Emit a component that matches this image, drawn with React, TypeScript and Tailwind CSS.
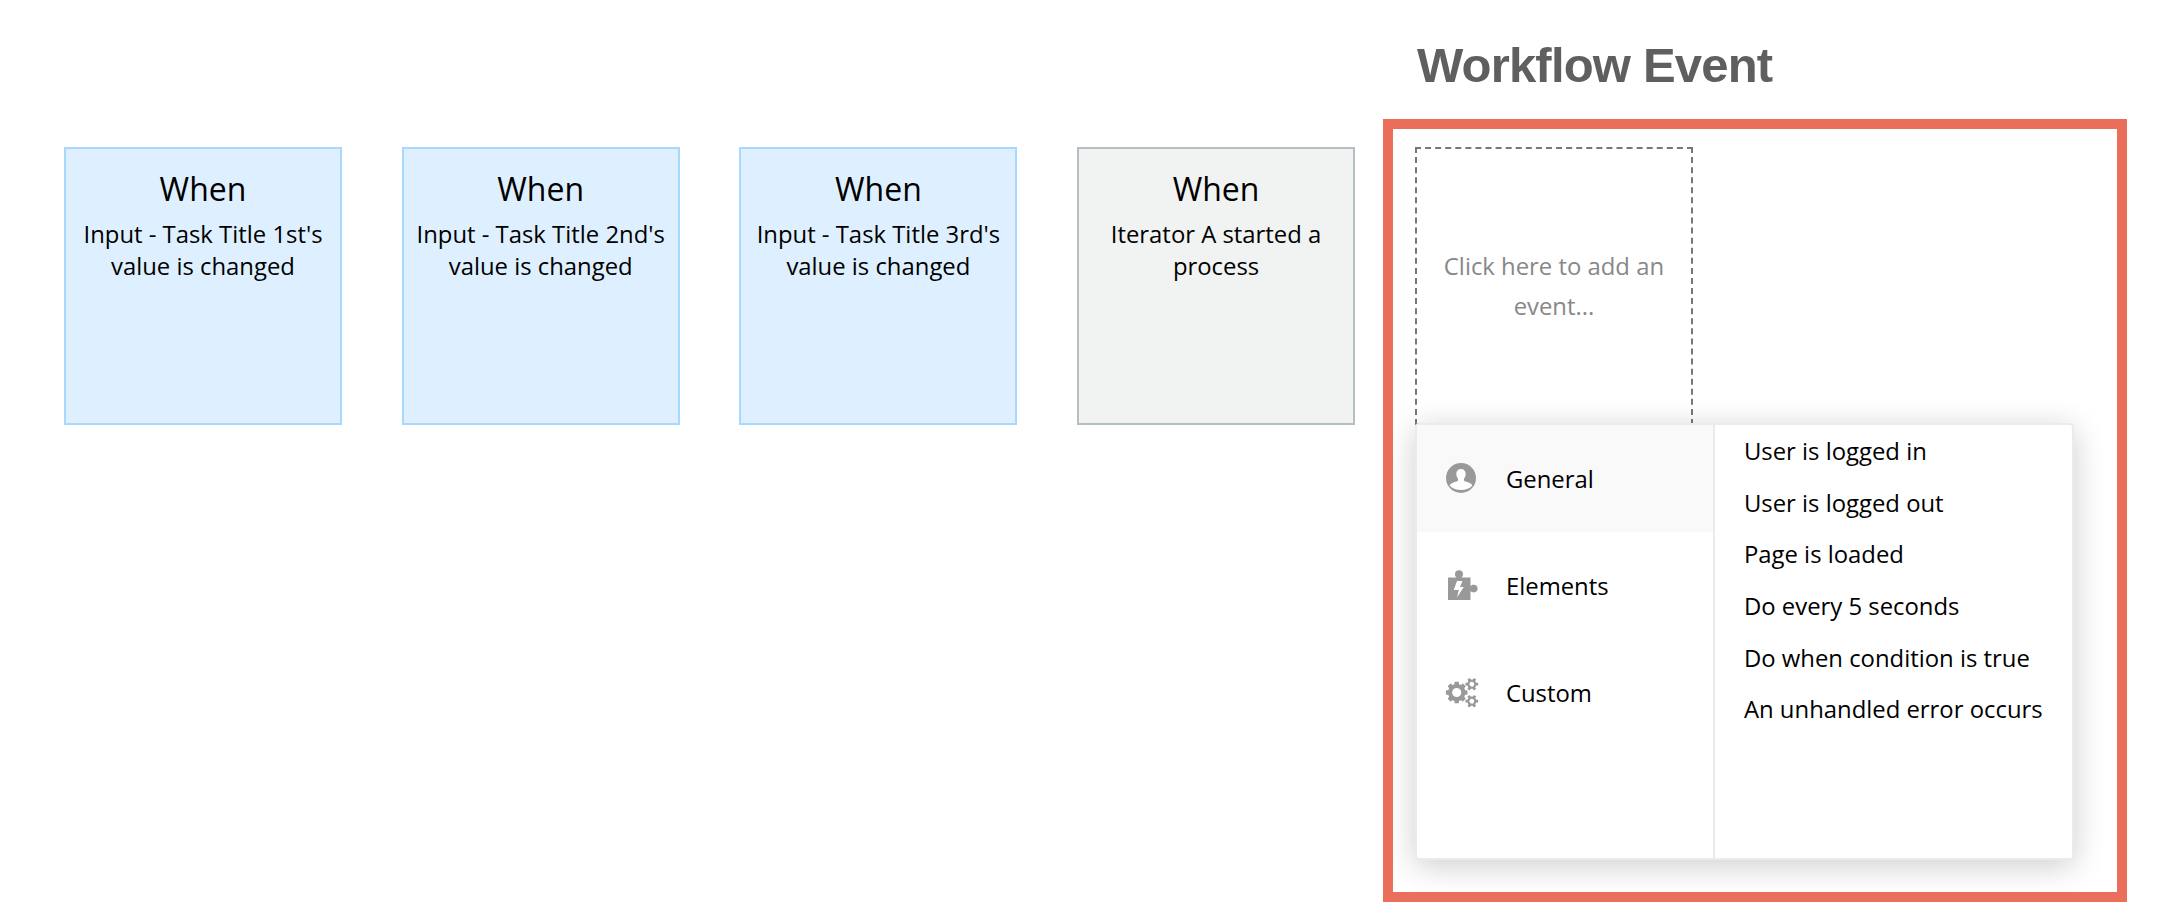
import React, { useState } from "react";

const events = [
  { id: 1, text: "Input - Task Title 1st's value is changed", tone: "blue" },
  { id: 2, text: "Input - Task Title 2nd's value is changed", tone: "blue" },
  { id: 3, text: "Input - Task Title 3rd's value is changed", tone: "blue" },
  { id: 4, text: "Iterator A started a process", tone: "gray" },
];

const UserIcon = () => (
  <svg className="w-8 h-8" viewBox="0 0 32 32" aria-hidden="true">
    <circle cx="15" cy="15" r="15" fill="#999" />
    <path
      d="M15 6c3 0 4.8 2 4.7 5-.1 2.3-.9 3.600-1.700 4.700v1.800c0 1.300 8.200 1.800 8.200 5.300C23.500 25.800 19 27 15 27s-8.500-1.200-11.200-4.200c0-3.500 8.200-4 8.200-5.300v-1.800c-.8-1.100-1.600-2.400-1.700-4.700C10.200 8 12 6 15 6z"
      fill="#fff"
    />
  </svg>
);

const PuzzleIcon = () => (
  <svg className="w-8 h-8" viewBox="0 0 32 32" aria-hidden="true">
    <path
      d="M2 7.500h8.500C9.300 6.500 9 5.300 9 4.200a4 4 0 0 1 8 0c0 1.100-.3 2.300-1.500 3.300h9v8.700c1-1 2-1.400 3.300-1.400a3.800 3.800 0 0 1 0 7.600c-1.300 0-2.300-.4-3.300-1.400v9H2z"
      fill="#999"
    />
    <path d="M11 11h5.500l-2.500 6h3.800L11 27.500l1.800-7.500H7.700z" fill="#fff" />
  </svg>
);

const Gear = ({ cx, cy, r, teeth, hole, toothWidth, toothHeight, turn = 0 }) => (
  <g transform={`translate(${cx} ${cy}) rotate(${turn})`}>
    <circle r={(r + hole) / 2} fill="none" stroke="#999" strokeWidth={r - hole} />
    {Array.from({ length: teeth }).map((_, i) => (
      <rect
        key={i}
        x={-toothWidth / 2}
        y={-r - toothHeight}
        width={toothWidth}
        height={toothHeight + 1}
        rx="0.6"
        fill="#999"
        transform={`rotate(${(360 / teeth) * i})`}
      />
    ))}
  </g>
);

const GearsIcon = () => (
  <svg className="w-8 h-8 overflow-visible" viewBox="0 0 32 32" aria-hidden="true">
    <Gear cx={10.7} cy={15.5} r={8.7} teeth={8} hole={4.6} toothWidth={4.4} toothHeight={2.1} />
    <Gear cx={25.8} cy={7.2} r={4.6} teeth={6} hole={2.4} toothWidth={2.8} toothHeight={1.8} turn={30} />
    <Gear cx={25.8} cy={24.2} r={4.6} teeth={6} hole={2.4} toothWidth={2.8} toothHeight={1.8} turn={30} />
  </svg>
);

const categories = [
  { id: "general", name: "General", icon: <UserIcon /> },
  { id: "elements", name: "Elements", icon: <PuzzleIcon /> },
  { id: "custom", name: "Custom", icon: <GearsIcon /> },
];

const options = [
  "User is logged in",
  "User is logged out",
  "Page is loaded",
  "Do every 5 seconds",
  "Do when condition is true",
  "An unhandled error occurs",
];

const EventCard = ({ text, tone }) => (
  <div
    className={`w-[278px] h-[278px] shrink-0 border-2 px-2 pt-[18px] text-center text-black ${
      tone === "blue"
        ? "bg-[#def0ff] border-[#a8d8fb]"
        : "bg-[#f0f3f2] border-[#b3bfc2]"
    }`}
  >
    <h2 className="text-[32px] leading-[44px]">When</h2>
    <p className="mt-[7px] text-[23.87px] leading-[32px]">{text}</p>
  </div>
);

const EventMenu = ({ active, setActive }) => (
  <div className="relative -mt-[2px] flex w-[659px] h-[437px] rounded-[4px] border-2 border-[#ebebeb] bg-white shadow-[0_6px_32px_rgba(0,0,0,0.2)]">
    <div className="w-[298px] shrink-0 border-r-2 border-[#ebebeb]">
      {categories.map((category) => (
        <button
          key={category.id}
          className={`flex w-full h-[107.3px] items-center pl-[29px] text-[23.87px] text-left ${
            active === category.id ? "bg-[#f9f9f9]" : "bg-white"
          }`}
          onClick={() => setActive(category.id)}
        >
          {category.icon}
          <span className="ml-7">{category.name}</span>
        </button>
      ))}
    </div>
    <ul className="pl-[29px]">
      {options.map((option) => (
        <li
          key={option}
          className="h-[51.7px] text-[23.87px] leading-[52px] whitespace-nowrap"
        >
          {option}
        </li>
      ))}
    </ul>
  </div>
);

const App: React.FC = () => {
  const [active, setActive] = useState("general");

  return (
    <main className="flex w-[2166px] h-[914px] items-start overflow-hidden bg-white pl-16 font-['Open_Sans','Noto_Sans',sans-serif] text-black">
      <div className="flex shrink-0 gap-[59.7px] pt-[147px]">
        {events.map((event) => (
          <EventCard key={event.id} text={event.text} tone={event.tone} />
        ))}
      </div>

      <section className="ml-[27.9px] w-[744px] shrink-0">
        <h1 className="h-[119px] pl-[34px] pt-[38px] font-['Liberation_Sans',Arial,sans-serif] text-[49px] leading-[55px] font-bold tracking-[-0.8px] text-[#5f5f5f]">
          Workflow Event
        </h1>
        <div className="h-[783px] overflow-hidden border-10 border-[#ea6e59] pl-[22px] pt-[18px]">
          <button className="flex w-[278px] h-[278px] items-center justify-center border-2 border-dashed border-[#777] px-5 text-[23.87px] leading-[40px] text-[#888]">
            Click here to add an event...
          </button>
          <EventMenu active={active} setActive={setActive} />
        </div>
      </section>
    </main>
  );
};

export default App;
